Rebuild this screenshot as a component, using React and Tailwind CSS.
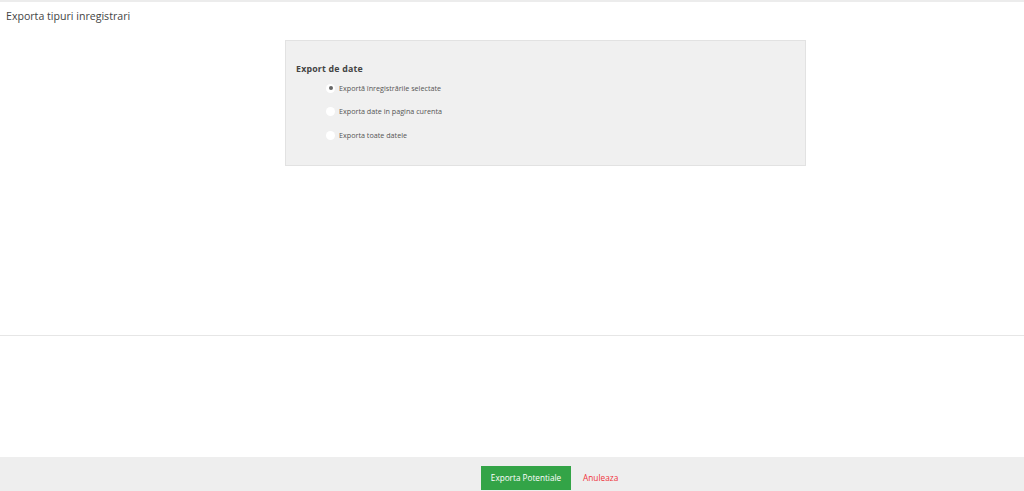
import React from "react";

function Radio({ checked, label }) {
  return (
    <div className="flex items-center h-[12px]">
      <span className="w-[9px] h-[9px] rounded-full bg-white flex items-center justify-center">
        {checked && <span className="w-[4px] h-[4px] rounded-full bg-[#666]" />}
      </span>
      <span className="ml-[4px] text-[7.2px] text-[#555]">{label}</span>
    </div>
  );
}

export default function App() {
  return (
    <div
      className="w-[1024px] h-[491px] bg-white flex flex-col overflow-hidden"
      style={{ fontFamily: '"Open Sans", sans-serif' }}
    >
      <div className="h-[2px] bg-[#ececec]" />
      <div className="h-[334px] flex flex-col border-b border-[#e6e6e6]">
        <div className="pl-[6px] pt-[6px] text-[10.6px] text-[#444] leading-[16px]">
          Exporta tipuri inregistrari
        </div>
        <div className="ml-[285px] mt-[16px] w-[521px] h-[126px] bg-[#f0f0f0] border border-[#e2e2e2] pl-[10px] pt-[22px]">
          <div className="text-[8.8px] font-bold text-[#444] leading-[12px] tracking-[0.2px]">Export de date</div>
          <div className="pl-[30px] mt-[7px] flex flex-col gap-[11.5px]">
            <Radio checked label="Exportă înregistrările selectate" />
            <Radio label="Exporta date in pagina curenta" />
            <Radio label="Exporta toate datele" />
          </div>
        </div>
      </div>
      <div className="flex-1" />
      <div className="h-[34px] bg-[#eeeeee] flex items-center pl-[481px] pt-[9px] pb-[1px]">
        <button className="w-[90px] h-[24px] bg-[#33a447] text-white text-[8.2px] flex items-center justify-center">
          Exporta Potentiale
        </button>
        <span className="ml-[12px] text-[8.3px] text-[#f0333b]">Anuleaza</span>
      </div>
    </div>
  );
}
